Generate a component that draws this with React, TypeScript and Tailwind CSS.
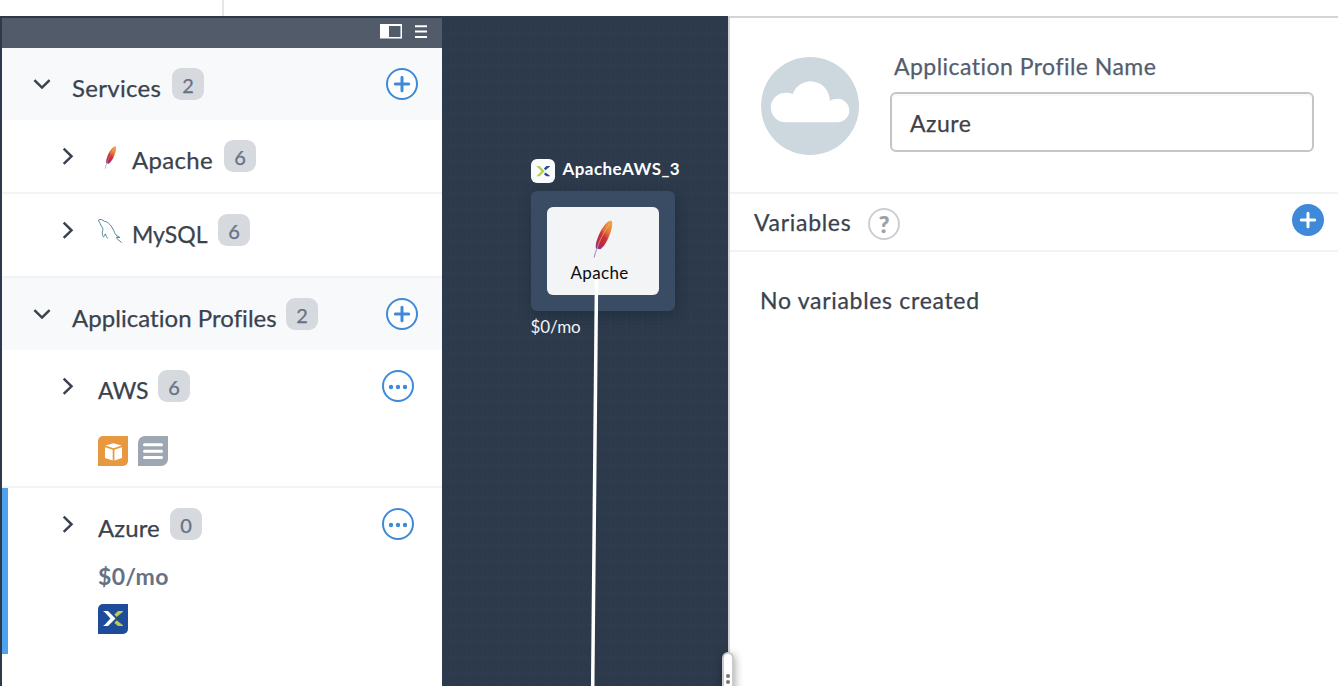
import type { ReactNode } from "react";

function DownChevron() {
  return (
    <svg className="h-4 w-5" viewBox="0 0 20 16" fill="none" stroke="#3a424e" strokeWidth="2.500">
      <path d="M2.400 4.200 10 11.600l7.600-7.400" />
    </svg>
  );
}

function RightChevron() {
  return (
    <svg className="h-5 w-4" viewBox="0 0 16 20" fill="none" stroke="#3a424e" strokeWidth="2.500">
      <path d="M3.700 2.700 11.500 10.300l-7.800 7.600" />
    </svg>
  );
}

function Badge({ children }: { children: ReactNode }) {
  return (
    <span className="h-8 w-8 shrink-0 rounded-[9px] bg-[#d6d9de] pt-[1px] text-center text-[20px] leading-[32px] text-[#667284]">
      {children}
    </span>
  );
}

function Plus({ solid = false }: { solid?: boolean }) {
  return (
    <svg className="size-8 shrink-0" viewBox="0 0 32 32">
      <circle cx="16" cy="16" r={solid ? 16 : 15} fill={solid ? "#3f89d9" : "#fff"} stroke="#3f89d9" strokeWidth={solid ? 0 : 2} />
      <path d="M16 9.300v13.400M9.300 16h13.400" stroke={solid ? "#fff" : "#3f89d9"} strokeWidth="3" strokeLinecap="round" />
    </svg>
  );
}

function More() {
  return (
    <svg className="size-8 shrink-0" viewBox="0 0 32 32" fill="#3f89d9">
      <circle cx="16" cy="16" r="15" fill="#fff" stroke="#3f89d9" strokeWidth="2" />
      <circle cx="9" cy="17" r="2.200" />
      <circle cx="16" cy="17" r="2.200" />
      <circle cx="23" cy="17" r="2.200" />
    </svg>
  );
}

function Feather({ className, id }: { className: string; id: string }) {
  return (
    <svg className={className} viewBox="0 0 20 38">
      <defs>
        <linearGradient id={id} x1="0.8" y1="0" x2="0.2" y2="1">
          <stop offset="0" stopColor="#f2a33a" />
          <stop offset="0.35" stopColor="#e0743a" />
          <stop offset="0.55" stopColor="#cb3337" />
          <stop offset="0.8" stopColor="#bd2b43" />
          <stop offset="1" stopColor="#8a3188" />
        </linearGradient>
      </defs>
      <path d="M18 .6C14 1 9 7.500 5.800 15 3.500 20.500 2.200 25 3 28.500l4.200.7c3-1.500 6.600-7.500 9.100-13.500C18.900 9 20.500 2 18 .6Z" fill={`url(#${id})`} />
      <path d="M16.500 4C11 12 6 21 4 29" fill="none" stroke="#f2c3a4" strokeWidth=".7" opacity=".8" />
      <path d="M4.600 27.500C3 30.500 1.800 34 1.200 37.500" fill="none" stroke="#a77bb8" strokeWidth="1" />
    </svg>
  );
}

function Dolphin() {
  return (
    <svg className="h-6 w-6" viewBox="0 0 24 24" fill="none" stroke="#4a87a1" strokeWidth="1" strokeLinejoin="round">
      <path d="M.6 1C2.500-.2 4.400.8 6.200 2.200c4.500.6 7.400 5 9.600 9.500.9 2.100 1.700 4.200 3.200 5.100l3 1.700-3.700-.2 1.500 2.200 3.800 3M.6 1c-.4 1.200 1.200 2.400 1.600 3.600.4 1.600 1.400 3 2.400 4.300.5.900.200 2-.100 3.200-.3 2.200-.2 4.800 1.100 5.800.8-.4 1.200-2 1.600-3 1 1.900 1.500 3.400 2.400 4.600" />
    </svg>
  );
}

function Mark({ left, right, className }: { left: string; right: string; className: string }) {
  return (
    <svg className={className} viewBox="0 0 20 16">
      <path d="M0 0h5l7.500 7.500L5 15H0l2-1.500 5.400-6L2 1.500Z" fill={left} />
      <path d="M20 0h-5l-3.600 3.500 2.200 2.500L20 .7ZM20 15h-5l-3.600-3 2.200-2.700L20 14.300Z" fill={right} />
    </svg>
  );
}

function Sidebar() {
  return (
    <aside className="flex w-[440px] shrink-0 flex-col bg-white [-webkit-text-stroke:0.25px]">
      <div className="flex h-[30px] shrink-0 items-start justify-end gap-[13px] bg-[#525b69] pr-[15px] pt-[6px]">
        <svg className="h-[15px] w-[22px]" viewBox="0 0 22 15">
          <path d="M0 0h22v14.500H0ZM9 2v11h11.500V2Z" fill="#fff" fillRule="evenodd" />
        </svg>
        <svg className="mt-[1px] h-[13px] w-3" viewBox="0 0 12 13">
          <path d="M0 1.200h12M0 6.600h12M0 12h12" stroke="#fff" strokeWidth="2" />
        </svg>
      </div>

      <div className="flex h-[72px] items-start bg-[#f7f9fb] pl-[30px] pr-6 pt-5">
        <div className="mt-2 w-10"><DownChevron /></div>
        <span className="mt-1 w-[100px] whitespace-nowrap text-[24px] leading-8 tracking-[0.3px]">Services</span>
        <Badge>2</Badge>
        <div className="ml-auto"><Plus /></div>
      </div>

      <div className="flex h-[74px] items-start border-b-2 border-[#f2f3f5] pl-[58px] pt-5">
        <div className="mt-[6px] w-11"><RightChevron /></div>
        <Feather id="feather-small" className="mt-[6px] h-[23px] w-[13px]" />
        <span className="ml-[15px] mt-1 w-[92px] whitespace-nowrap text-[24px] leading-8 tracking-[0.3px]">Apache</span>
        <Badge>6</Badge>
      </div>
      <div className="flex h-[84px] items-start border-b-2 border-[#f0f2f4] pl-[58px] pt-5">
        <div className="mt-[6px] w-[38px]"><RightChevron /></div>
        <div className="mt-[5px]"><Dolphin /></div>
        <span className="ml-[10px] mt-1 w-[86px] whitespace-nowrap text-[23px] leading-8 tracking-[0px]">MySQL</span>
        <Badge>6</Badge>
      </div>

      <div className="flex h-[72px] items-start bg-[#f7f9fb] pl-[30px] pr-6 pt-5">
        <div className="mt-2 w-10"><DownChevron /></div>
        <span className="mt-1 w-[214px] whitespace-nowrap text-[24px] leading-8 tracking-[0.04px]">Application Profiles</span>
        <Badge>2</Badge>
        <div className="ml-auto"><Plus /></div>
      </div>

      <div className="h-[138px] border-b-2 border-[#f2f3f5] pl-[58px] pr-7 pt-5">
        <div className="flex items-start">
          <div className="mt-[6px] w-[38px]"><RightChevron /></div>
          <span className="mt-1 w-[60px] whitespace-nowrap text-[23px] leading-8 tracking-[-0.1px]">AWS</span>
          <Badge>6</Badge>
          <div className="ml-auto"><More /></div>
        </div>
        <div className="ml-[38px] mt-[30px] flex gap-[10px]">
          <svg className="h-[30px] w-[30px] rounded-br-[5px] rounded-tl-[5px] bg-[#e8993f]" viewBox="0 0 30 30" fill="#fff">
            <path d="M15.500 7.300 23.600 9.500l-8.100 2.800-8.100-2.800ZM7 11.200l7.700 2.600v10.700L7 22ZM24 11.200l-7.600 2.600v10.700L24 22Z" />
          </svg>
          <svg className="h-[30px] w-[30px] rounded-br-[7px] rounded-tl-[7px] bg-[#9ca7b1]" viewBox="0 0 30 30" stroke="#fff" strokeWidth="3" strokeLinecap="round">
            <path d="M6.500 8.700h17M6.500 15.200h17M6.500 21.500h17" />
          </svg>
        </div>
      </div>

      <div className="h-[166px] border-l-[6px] border-[#4ea2ef] pl-[52px] pr-7 pt-5">
        <div className="flex items-start">
          <div className="mt-[6px] w-[38px]"><RightChevron /></div>
          <span className="mt-1 w-[72px] whitespace-nowrap text-[24px] leading-8 tracking-[0.1px]">Azure</span>
          <Badge>0</Badge>
          <div className="ml-auto"><More /></div>
        </div>
        <div className="ml-[38px] mt-[16px] text-[23px] font-bold leading-8 tracking-[0.3px] text-[#667284] [-webkit-text-stroke:0px]">$0/mo</div>
        <div className="ml-[38px] mt-[12px] flex h-[30px] w-[30px] items-center justify-center rounded-br-[5px] rounded-tl-[5px] bg-[#1e4c9a]">
          <Mark left="#fff" right="#b7cf4a" className="h-4 w-5" />
        </div>
      </div>
    </aside>
  );
}

function Canvas() {
  return (
    <main className="relative w-[286px] shrink-0 overflow-hidden bg-[#2c3a4c] bg-[linear-gradient(to_right,#2f3e4f_1px,transparent_1px),linear-gradient(to_bottom,#2f3e4f_1px,transparent_1px)] bg-[size:16px_16px] bg-[position:8px_15px]">
      <div className="absolute left-[88.5px] top-[141px] w-[160px]">
        <div className="flex h-6 items-center">
          <div className="flex size-6 shrink-0 items-center justify-center rounded-[6px] bg-[#fafbfc]">
            <Mark left="#b7cf4a" right="#1e4c9a" className="h-[11px] w-[14px]" />
          </div>
          <span className="-mt-[5px] ml-2 whitespace-nowrap text-[17px] font-bold tracking-[0.45px] text-white">ApacheAWS_3</span>
        </div>
        <div className="mt-2 h-[120px] w-[144px] rounded-[6px] bg-[#394c63] p-4 shadow-[2px_4px_14px_rgba(15,25,40,0.35)]">
          <div className="flex h-[88px] w-28 flex-col items-center rounded-[6px] bg-[#f2f4f6] pt-[13px]">
            <Feather id="feather-large" className="h-[38px] w-5" />
            <span className="-ml-[6px] mt-[3px] whitespace-nowrap text-[17px] leading-6 tracking-[0.35px] text-[#0b0b0c]">Apache</span>
          </div>
        </div>
        <div className="mt-1 text-[17px] leading-6 tracking-[-0.1px] text-[#f3f5f7]">$0/mo</div>
      </div>
      <svg className="absolute left-0 top-0 h-[668px] w-[286px]" viewBox="0 0 286 668">
        <path d="M154.500 262 150.700 668" stroke="#fff" strokeWidth="3.500" />
      </svg>
    </main>
  );
}

function Details() {
  return (
    <section className="flex min-w-0 flex-1 flex-col border-l-2 border-[#d3d4d6] bg-white [-webkit-text-stroke:0.25px]">
      <div className="flex h-[176px] shrink-0 items-start border-b-2 border-[#f1f2f3] pl-[31px] pr-6 pt-8">
        <svg className="mt-[7px] size-[98px] shrink-0" viewBox="0 0 98 98">
          <circle cx="49" cy="49" r="49" fill="#ccd7de" />
          <path d="M24.600 65.300a14.800 14.800 0 0 1 0-29.600c2.500 0 5 .4 7.200 1.300a19 19 0 0 1 36.900 7c2.200-1.500 5-2.200 7.800-2.200a11.700 11.700 0 0 1 0 23.500Z" fill="#fff" />
        </svg>
        <div className="ml-[31px] flex-1">
          <div className="ml-1 h-8 whitespace-nowrap text-[23px] leading-8 tracking-[0.47px] text-[#535d6e]">Application Profile Name</div>
          <div className="mt-[10px] flex h-[60px] items-center rounded-[6px] border-2 border-[#c2c6cb] px-[18px] pt-[2px] text-[23px] tracking-[0.5px] text-[#3f4245] shadow-[inset_0_2px_2px_rgba(0,0,0,0.03)]">
            <span>Azure</span>
          </div>
        </div>
      </div>
      <div className="flex h-[58px] shrink-0 items-start border-b-2 border-[#f1f2f3] pl-6 pr-[14px] pt-[10px]">
        <span className="mt-[2px] w-[114px] whitespace-nowrap text-[23px] leading-8 tracking-[0.7px]">Variables</span>
        <span className="mt-1 flex size-8 items-center justify-center rounded-full border-2 border-[#cccfd2] text-[23px] font-black leading-none text-[#9da1a6]">?</span>
        <div className="ml-auto"><Plus solid /></div>
      </div>
      <div className="ml-[30px] mt-8 text-[23px] leading-8 tracking-[0.7px]">No variables created</div>
    </section>
  );
}

export default function App() {
  return (
    <div className="relative flex h-[686px] w-[1338px] flex-col overflow-hidden bg-white font-['Lato',sans-serif] text-[#3a424e]">
      <header className="h-4 w-[224px] shrink-0 border-r-2 border-[#e6e6e6]" />
      <div className="flex h-[670px]">
        <div className="flex w-[728px] shrink-0 overflow-hidden bg-[#2c3a4c] pl-[2px] pt-[2px]">
          <Sidebar />
          <Canvas />
        </div>
        <div className="flex min-w-0 flex-1 border-t-2 border-[#d3d4d6]">
          <Details />
        </div>
      </div>
      <div className="absolute left-[722px] top-[652px] flex h-[60px] w-3 flex-col items-center gap-[2px] rounded-[6px] border-2 border-[#c9cacc] bg-white pt-5 shadow-[1px_2px_8px_rgba(0,0,0,0.35)]">
        <span className="size-1 shrink-0 rounded-full bg-[#777]" />
        <span className="size-1 shrink-0 rounded-full bg-[#777]" />
      </div>
    </div>
  );
}
